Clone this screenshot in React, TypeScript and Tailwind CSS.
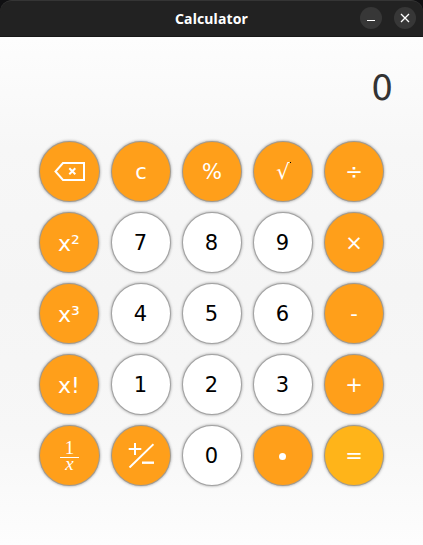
import type { ReactNode } from 'react';

type Tone = 'orange' | 'white' | 'amber';

const tones: Record<Tone, string> = {
  orange: 'bg-[#ff9f1a] text-white',
  white: 'bg-white text-black',
  amber: 'bg-[#ffb419] text-white',
};

type KeyProps = { tone?: Tone; label: string; wide?: boolean; children: ReactNode };

function Key({ tone = 'orange', label, wide = false, children }: KeyProps) {
  return (
    <button
      aria-label={label}
      className={`flex h-[61px] items-center justify-center rounded-[50%] border border-[#999]/90 text-[21px] leading-none shadow-[0_0_3px_rgba(0,0,0,0.4)] ${wide ? 'w-[61px]' : 'w-[60px]'} ${tones[tone]}`}
    >
      {children}
    </button>
  );
}

function Backspace() {
  return (
    <svg width="31" height="19" viewBox="0 0 31 19" fill="none" stroke="white" strokeWidth="2">
      <path d="M9 1H30V18H9L1.5 9.5Z" />
      <path d="M15.3 6.3L21.3 12.3M21.3 6.3L15.3 12.3" />
    </svg>
  );
}

function PlusMinus() {
  return (
    <svg width="26" height="25" viewBox="0 0 26 25" fill="none" stroke="white" strokeWidth="2">
      <path d="M0.7 6H13.3M7 0V12M1.5 24.5L25.5 1.2" />
      <path d="M14 19.7H26" strokeWidth="2.4" />
    </svg>
  );
}

function Fraction() {
  return (
    <span className="flex flex-col items-center pb-[3px] font-['Liberation_Serif',serif] text-[19px] text-white">
      <span className="leading-[19px]">1</span>
      <span className="h-px w-[19px] bg-white" />
      <span className="leading-[12px] italic">x</span>
    </span>
  );
}

function Digit({ n }: { n: string }) {
  return (
    <Key tone="white" label={n}>
      <span className="pt-px pr-px">{n}</span>
    </Key>
  );
}

function Symbol({ children }: { children: ReactNode }) {
  return <span className="pt-[2px]">{children}</span>;
}

function Power({ children }: { children: ReactNode }) {
  return <span className="pt-[2px] text-[22px]">{children}</span>;
}

export default function App() {
  return (
    <div className="h-[545px] w-[423px] overflow-hidden bg-[#101012] font-['DejaVu_Sans',sans-serif]">
      <header className="flex h-[37px] items-center rounded-t-[12px] border-t border-b border-t-[#353535] border-b-[#181818] bg-[#222]">
        <div className="w-[83px]" />
        <h1 className="flex-1 text-center font-['Noto_Sans',sans-serif] text-[14px] leading-5 font-bold tracking-[0.15px] text-white">
          Calculator
        </h1>
        <div className="flex w-[83px] justify-end gap-3 pr-[7px] pb-px">
          <button aria-label="Minimize" className="flex size-[22px] items-center justify-center rounded-full bg-[#373737]">
            <svg width="22" height="22" viewBox="0 0 22 22" stroke="white">
              <path d="M7 13.5H15" />
            </svg>
          </button>
          <button aria-label="Close" className="flex size-[22px] items-center justify-center rounded-full bg-[#373737]">
            <svg width="22" height="22" viewBox="0 0 22 22" stroke="white" strokeWidth="1.3">
              <path d="M7 7L15 15M15 7L7 15" />
            </svg>
          </button>
        </div>
      </header>
      <main className="h-[508px] bg-[linear-gradient(to_bottom,#fdfdfd_0%,#f7f7f7_22%,#f5f5f5_50%,#f7f7f7_78%,#fdfdfd_100%)]">
        <div className="flex h-[104px] items-center justify-end pr-[30px] pb-[2px] text-[36px] leading-none text-[#333]">
          <output className="origin-right scale-x-95">0</output>
        </div>
        <div className="grid grid-cols-[61px_60px_60px_60px_60px] gap-x-[11px] gap-y-[10px] pl-[39px]">
          <Key wide label="Backspace"><Backspace /></Key>
          <Key label="Clear"><Symbol>c</Symbol></Key>
          <Key label="Percent"><Symbol>%</Symbol></Key>
          <Key label="Square root">
            <span className="relative pt-[2px]">
              √
              <span className="absolute top-[2px] right-[-1px] size-px bg-black" />
            </span>
          </Key>
          <Key label="Divide"><Symbol>÷</Symbol></Key>

          <Key label="Square"><Power>x²</Power></Key>
          <Digit n="7" />
          <Digit n="8" />
          <Digit n="9" />
          <Key label="Multiply"><Symbol>×</Symbol></Key>

          <Key label="Cube"><Power>x³</Power></Key>
          <Digit n="4" />
          <Digit n="5" />
          <Digit n="6" />
          <Key label="Subtract"><Symbol>-</Symbol></Key>

          <Key label="Factorial"><Power>x!</Power></Key>
          <Digit n="1" />
          <Digit n="2" />
          <Digit n="3" />
          <Key label="Add"><Symbol>+</Symbol></Key>

          <Key wide label="Reciprocal"><Fraction /></Key>
          <Key label="Change sign"><PlusMinus /></Key>
          <Digit n="0" />
          <Key label="Decimal point"><span className="mt-[2px] mr-px size-[7px] rounded-full bg-white" /></Key>
          <Key tone="amber" label="Equals"><Symbol>=</Symbol></Key>
        </div>
      </main>
    </div>
  );
}
